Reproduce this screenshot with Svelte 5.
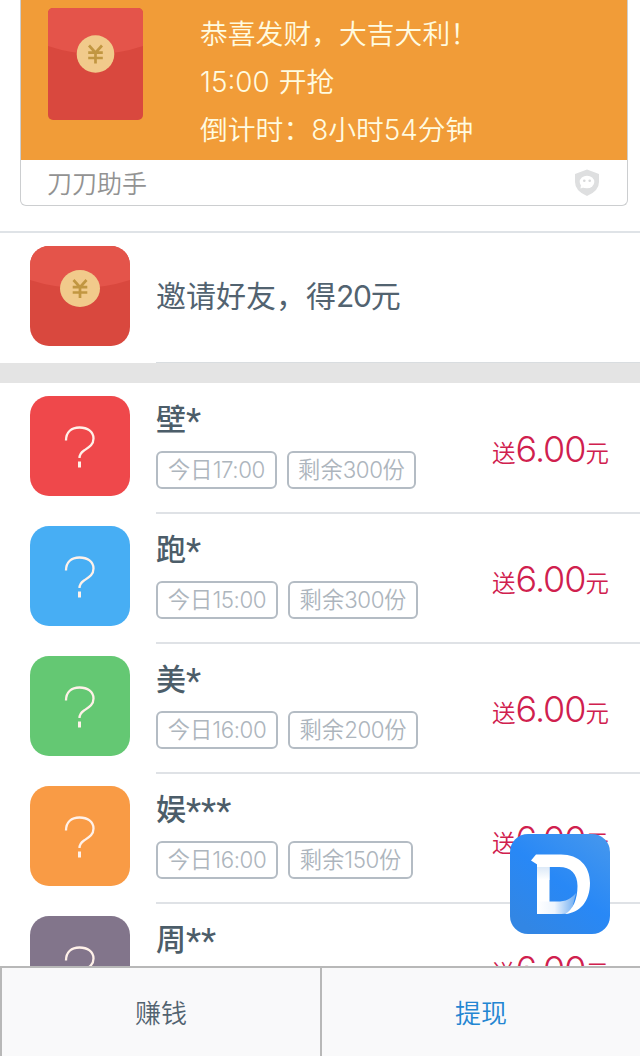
<script>
  const items = [
    { name: '壁', stars: '*', time: '17:00', left: 300, color: '#ef484b', w1: 121, w2: 129 },
    { name: '跑', stars: '*', time: '15:00', left: 300, color: '#47aef4', w1: 122, w2: 130 },
    { name: '美', stars: '*', time: '16:00', left: 200, color: '#64c873', w1: 122, w2: 130 },
    { name: '娱', stars: '***', time: '16:00', left: 150, color: '#f99b45', w1: 122, w2: 125 },
    { name: '周', stars: '**', color: '#82758b' }
  ];
</script>

{#snippet yen()}
  <path d="M-6.500-8.500 0-1.300 6.500-8.500M0-1.300V9.500M-7.300-1.300H7.300M-7.300 4H7.300" fill="none" stroke="#c19641" stroke-width="2.700" />
{/snippet}

<div class="screen">
  <section class="top">
    <div class="card">
      <div class="promo">
        <svg class="envelope" width="95" height="112" viewBox="0 0 95 112">
          <clipPath id="env"><rect width="95" height="112" rx="5" /></clipPath>
          <g clip-path="url(#env)">
            <rect width="95" height="112" fill="#d9483e" />
            <path d="M0 0H95V38Q47.500 54 0 38Z" fill="#e4544a" />
          </g>
          <circle cx="47.500" cy="46" r="18.800" fill="#f1ca8b" />
          <g transform="translate(47.500 46)">{@render yen()}</g>
        </svg>
        <div class="message">
          <p>恭喜发财，大吉大利！</p>
          <p class="start"><span class="num">15:00</span><span>开抢</span></p>
          <p>倒计时：<span class="num">8</span>小时<span class="num">54</span>分钟</p>
        </div>
      </div>
      <div class="source">
        <span>刀刀助手</span>
        <svg width="26" height="28" viewBox="0 0 26 28">
          <path d="M13 .5 25 5V13Q25 22 13 27Q1 22 1 13V5Z" fill="#dedfe0" />
          <ellipse cx="13" cy="13" rx="7.300" ry="6.300" fill="#fff" />
          <path d="M7 16 6.500 19.500 11 18Z" fill="#fff" />
          <circle cx="10.300" cy="11.800" r="1.300" fill="#d8d9da" />
          <circle cx="15.700" cy="11.800" r="1.300" fill="#d8d9da" />
        </svg>
      </div>
    </div>
  </section>

  <section class="invite">
    <svg width="100" height="100" viewBox="0 0 100 100">
      <clipPath id="tile"><rect width="100" height="100" rx="19" /></clipPath>
      <g clip-path="url(#tile)">
        <rect width="100" height="100" fill="#d9483e" />
        <path d="M0 0H100V34Q50 50 0 34Z" fill="#e4544a" />
      </g>
      <ellipse cx="50" cy="42.500" rx="20" ry="18.500" fill="#f1ca8b" />
      <g transform="translate(50 42.500)">{@render yen()}</g>
    </svg>
    <div class="invite-text">邀请好友，得<span class="num">20</span>元</div>
  </section>

  <div class="gap"></div>

  <main>
    {#each items as item}
      <article>
        <div class="tile" style:background={item.color}>
          <svg width="100" height="100" viewBox="0 0 100 100">
            <path d="M36 44.500C36 36 41.500 31.500 49.500 31.500S63.500 35.500 63.500 42.500C63.500 49 58.500 51.500 54 54.500C50.500 57 49.500 58.500 49.500 62" />
            <path class="dot" d="M49.500 65.500V71.500" />
          </svg>
        </div>
        <div class="info">
          <div class="details">
            <h2>{item.name}<span>{item.stars}</span></h2>
            {#if item.time}
              <div class="tags">
                <span class="tag" style:width="{item.w1}px">今日<span class="num">{item.time}</span></span>
                <span class="tag" style:width="{item.w2}px">剩余<span class="num">{item.left}</span>份</span>
              </div>
            {/if}
          </div>
          <div class="price">送<b>6.00</b>元</div>
        </div>
      </article>
    {/each}
  </main>

  <nav>
    <div class="tab">赚钱</div>
    <div class="tab active">提现</div>
  </nav>

  <svg class="float" width="100" height="100" viewBox="0 0 100 100">
    <defs>
      <linearGradient id="blue" x1="1" y1="0" x2=".25" y2="1">
        <stop offset="0" stop-color="#4798ed" />
        <stop offset=".55" stop-color="#2888f6" />
        <stop offset="1" stop-color="#3286e4" />
      </linearGradient>
      <linearGradient id="fold" x1="0" y1="0" x2="1" y2="0">
        <stop offset="0" stop-color="#fff" />
        <stop offset=".45" stop-color="#eef5fd" />
        <stop offset="1" stop-color="#6dacf2" />
      </linearGradient>
      <linearGradient id="shade" x1="0" y1="0" x2="0" y2="1">
        <stop offset="0" stop-color="#dce9f7" />
        <stop offset="1" stop-color="#fff" />
      </linearGradient>
    </defs>
    <rect width="100" height="100" rx="18" fill="url(#blue)" />
    <path d="M27 30H39.500V80H27Z" fill="#fff" />
    <path d="M27 33H39.500V46H27Z" fill="url(#shade)" />
    <path d="M27 67.500H47C56 67.500 61 65 66 59L61 79Q55 80 51 80H27Z" fill="url(#fold)" />
    <path d="M26 20.500H51C69 20.500 80 32 80 49C80 67 70 79 55 80C63 76 67.500 65 67.500 52C67.500 40 61 33 49 33H28V31L21 26.500Z" fill="#fff" />
  </svg>
</div>

<style>
  :global(body) { margin: 0; }
  .screen {
    position: relative;
    width: 640px;
    height: 1056px;
    overflow: hidden;
    display: flex;
    flex-direction: column;
    background: #fff;
    font-family: Roboto, "Noto Sans CJK SC", sans-serif;
    font-weight: 350;
  }
  p, h2 { margin: 0; }
  svg { display: block; flex: none; }
  .num { font-family: Inter, sans-serif; font-weight: 300; letter-spacing: -.018em; line-height: 1; }
  .top {
    height: 231px;
    flex: none;
    padding: 0 12px 0 20px;
    border-bottom: 2px solid #dfe3e7;
  }
  .card {
    height: 206px;
    box-sizing: border-box;
    border: 1px solid #ccced0;
    border-top: 0;
    border-radius: 0 0 6px 6px;
    overflow: hidden;
  }
  .promo {
    height: 160px;
    background: #f19c38;
    display: flex;
    align-items: flex-start;
  }
  .envelope { margin: 8px 0 0 27px; }
  .message {
    margin: 11px 0 0 57px;
    color: #fffbe0;
    font-size: 27.800px;
    line-height: 48px;
    white-space: nowrap;
  }
  .message p { height: 48px; }
  .message .num { letter-spacing: 0; }
  .start { display: flex; gap: 9px; align-items: baseline; }
  .source {
    height: 43px;
    padding: 0 27px 2px 26px;
    display: flex;
    align-items: center;
    justify-content: space-between;
    color: #929292;
    font-size: 25px;
  }
  .source svg { position: relative; top: 1px; }
  .invite {
    height: 130px;
    flex: none;
    display: flex;
    padding-left: 30px;
    align-items: flex-start;
    gap: 26px;
  }
  .invite svg { margin-top: 13px; }
  .invite-text {
    flex: 1;
    height: 129px;
    border-bottom: 1px solid #d9dde0;
    line-height: 127px;
    font-size: 30px;
    font-weight: 400;
    color: #526370;
  }
  .invite-text .num { font-weight: 400; letter-spacing: -.04em; }
  .gap { height: 20px; flex: none; background: #e4e4e4; }
  main { flex: 1; min-height: 0; overflow: hidden; padding-top: 1px; }
  article {
    height: 130px;
    display: flex;
    gap: 26px;
    padding-left: 30px;
  }
  .tile {
    width: 100px;
    height: 100px;
    flex: none;
    margin-top: 12px;
    border-radius: 19px;
  }
  .tile path { fill: none; stroke: #fff1e9; stroke-width: 2.300; }
  .tile .dot { stroke-width: 3; }
  .info {
    flex: 1;
    display: flex;
    justify-content: space-between;
    border-bottom: 2px solid #dfe2e6;
    padding-right: 31px;
  }
  h2 {
    height: 67px;
    line-height: 71px;
    font-size: 30px;
    font-weight: 500;
    color: #4c5d69;
  }
  h2 span { font-weight: 400; font-size: 35px; line-height: 1; vertical-align: -3px; }
  .tags { display: flex; gap: 10px; }
  .tag {
    height: 38px;
    box-sizing: border-box;
    border: 2px solid #b4bcc4;
    border-radius: 6px;
    line-height: 34px;
    text-align: center;
    font-size: 22.300px;
    color: #adb5bd;
    white-space: nowrap;
  }
  .price {
    line-height: 130px;
    font-size: 23.500px;
    color: #d0204e;
    white-space: nowrap;
  }
  .price b { font-family: Inter, sans-serif; font-size: 36px; font-weight: 300; letter-spacing: -1.050px; }
  nav {
    height: 90px;
    flex: none;
    box-sizing: border-box;
    display: grid;
    grid-template-columns: 1fr 1fr;
    border-top: 2px solid #b8b8b8;
    background: #f9f9fa;
    color: #526370;
    font-size: 26px;
    line-height: 92px;
    text-align: center;
    font-weight: 350;
  }
  .tab { border-left: 2px solid #b8b8b8; }
  .active { color: #2386d2; }
  .float { position: absolute; left: 510px; top: 834px; }
</style>
